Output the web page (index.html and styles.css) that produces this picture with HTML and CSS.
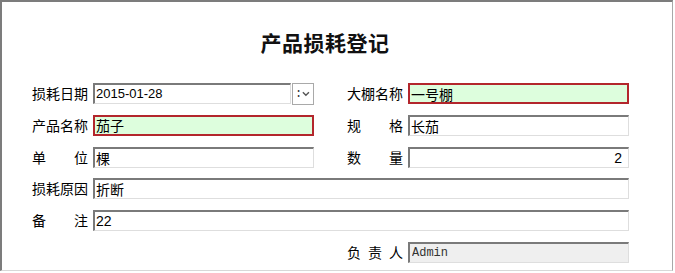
FILE: index.html
```html
<!DOCTYPE html>
<html lang="zh-CN">
<head>
    <meta charset="UTF-8">
    <title>产品损耗登记</title>
    <link rel="stylesheet" href="styles.css">
</head>
<body>
    <div class="frame">
        <h1 class="title">产品损耗登记</h1>

        <div class="form">
            <label class="lbl">损耗日期</label>
            <div class="date-wrap">
                <input class="fld" type="text" value="2015-01-28">
                <div class="drop"><span class="dots">:</span><svg width="9" height="6" viewBox="0 0 9 6"><path d="M1 1 L4.5 4.5 L8 1" fill="none" stroke="#555" stroke-width="1.6"/></svg></div>
            </div>
            <label class="lbl lbl-r">大棚名称</label>
            <input class="fld req" type="text" value="一号棚">

            <label class="lbl">产品名称</label>
            <input class="fld req" type="text" value="茄子">
            <label class="lbl lbl-r">规 格</label>
            <input class="fld" type="text" value="长茄">

            <label class="lbl">单 位</label>
            <input class="fld" type="text" value="棵">
            <label class="lbl lbl-r">数 量</label>
            <input class="fld num" type="text" value="2">

            <label class="lbl">损耗原因</label>
            <input class="fld wide" type="text" value="折断">

            <label class="lbl">备 注</label>
            <input class="fld wide" type="text" value="22">

            <label class="lbl lbl-r solo">负 责 人</label>
            <input class="fld ro" type="text" value="Admin" readonly>
        </div>
    </div>
</body>
</html>
```

FILE: styles.css
```css
body { margin: 0; background: #fff; font-family: "Noto Sans CJK SC", sans-serif; }
.frame { box-sizing: border-box; width: 673px; height: 271px; padding: 28px 0 0 30px; border-top: 2px solid #7c7c7c; border-left: 2px solid #7c7c7c; border-right: 1px solid #a8a8a8; border-bottom: 1px solid #d8d8d8; }
.title { margin: 0 0 29px 0; width: 586px; text-align: center; font-size: 21px; line-height: 24px; letter-spacing: 0.5px; font-weight: bold; color: #111; }
.form { display: grid; grid-template-columns: 56px 221px 84px 221px; grid-auto-rows: 21px; column-gap: 5px; row-gap: 10.8px; align-items: center; }
.lbl { font-size: 14px; line-height: 21px; color: #000; text-align: justify; text-align-last: justify; white-space: nowrap; }
.lbl-r { grid-column: 3; padding-left: 28px; }
.fld { box-sizing: border-box; width: 100%; height: 21px; margin: 0; padding: 0 1px; font-family: "Liberation Sans", "Noto Sans CJK SC", sans-serif; font-size: 14px; color: #000; background: #fff; border-top: 2px solid #7a7a7a; border-left: 2px solid #7a7a7a; border-right: 1px solid #dedede; border-bottom: 1px solid #dedede; outline: none; }
.fld.req { border: 2px solid #b3262c; background: #ddfedd; }
.fld.num { text-align: right; padding-right: 6px; }
.fld.wide { grid-column: 2 / 5; }
.fld.ro { grid-column: 4; background: #efefef; color: #333; font-family: "Liberation Mono", monospace; font-size: 12px; padding-left: 2px; }
.date-wrap { display: flex; gap: 1px; }
.date-wrap .fld { width: 199px; font-size: 13px; }
.drop { box-sizing: border-box; width: 22px; height: 22px; border: 1px solid #a9a9a9; display: flex; align-items: center; justify-content: space-between; padding: 0 3px 0 2px; font-size: 12px; color: #333; }
.dots { font-family: "Liberation Mono", monospace; }
```
